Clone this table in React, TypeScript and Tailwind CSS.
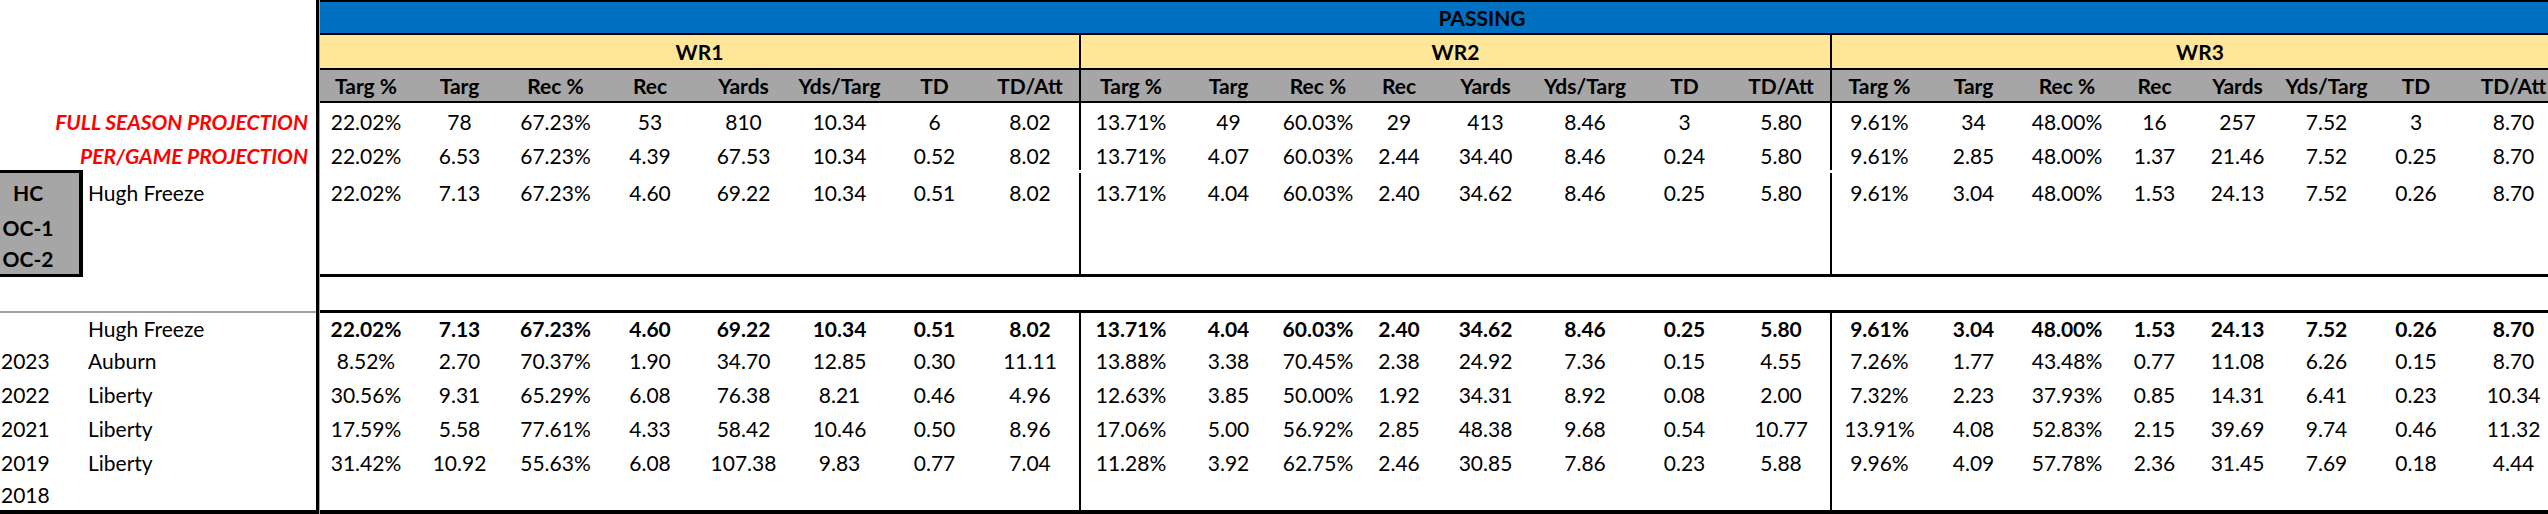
const headers = ['Targ %', 'Targ', 'Rec %', 'Rec', 'Yards', 'Yds/Targ', 'TD', 'TD/Att'];

const groups = [
  {
    name: 'WR1',
    box: 'w-[761px] border-r-2 border-black',
    cols: ['w-[92px]', 'w-[95px]', 'w-[97px]', 'w-[92px]', 'w-[95px]', 'w-[97px]', 'w-[93px]', 'w-[98px]'],
  },
  {
    name: 'WR2',
    box: 'w-[751px] border-r-2 border-black',
    cols: ['w-[100px]', 'w-[95px]', 'w-[84px]', 'w-[78px]', 'w-[95px]', 'w-[104px]', 'w-[95px]', 'w-[98px]'],
  },
  {
    name: 'WR3',
    box: 'w-[736px]',
    cols: ['w-[95px]', 'w-[93px]', 'w-[94px]', 'w-[81px]', 'w-[85px]', 'w-[93px]', 'w-[86px]', 'w-[109px]'],
  },
];

const projections = [
  {
    h: 'h-[37px]',
    vals: [
      '22.02%', '78', '67.23%', '53', '810', '10.34', '6', '8.02',
      '13.71%', '49', '60.03%', '29', '413', '8.46', '3', '5.80',
      '9.61%', '34', '48.00%', '16', '257', '7.52', '3', '8.70',
    ],
  },
  {
    h: 'h-[30px]',
    vals: [
      '22.02%', '6.53', '67.23%', '4.39', '67.53', '10.34', '0.52', '8.02',
      '13.71%', '4.07', '60.03%', '2.44', '34.40', '8.46', '0.24', '5.80',
      '9.61%', '2.85', '48.00%', '1.37', '21.46', '7.52', '0.25', '8.70',
    ],
  },
  {
    h: 'h-[42px] pt-[3px]',
    vals: [
      '22.02%', '7.13', '67.23%', '4.60', '69.22', '10.34', '0.51', '8.02',
      '13.71%', '4.04', '60.03%', '2.40', '34.62', '8.46', '0.25', '5.80',
      '9.61%', '3.04', '48.00%', '1.53', '24.13', '7.52', '0.26', '8.70',
    ],
  },
  { h: 'h-[31px]', vals: [] as string[] },
  { h: 'h-[31px]', vals: [] as string[] },
];

const history = [
  {
    year: '',
    team: 'Hugh Freeze',
    h: 'h-[30px]',
    bold: true,
    vals: [
      '22.02%', '7.13', '67.23%', '4.60', '69.22', '10.34', '0.51', '8.02',
      '13.71%', '4.04', '60.03%', '2.40', '34.62', '8.46', '0.25', '5.80',
      '9.61%', '3.04', '48.00%', '1.53', '24.13', '7.52', '0.26', '8.70',
    ],
  },
  {
    year: '2023',
    team: 'Auburn',
    h: 'h-[34px]',
    vals: [
      '8.52%', '2.70', '70.37%', '1.90', '34.70', '12.85', '0.30', '11.11',
      '13.88%', '3.38', '70.45%', '2.38', '24.92', '7.36', '0.15', '4.55',
      '7.26%', '1.77', '43.48%', '0.77', '11.08', '6.26', '0.15', '8.70',
    ],
  },
  {
    year: '2022',
    team: 'Liberty',
    h: 'h-[34px]',
    vals: [
      '30.56%', '9.31', '65.29%', '6.08', '76.38', '8.21', '0.46', '4.96',
      '12.63%', '3.85', '50.00%', '1.92', '34.31', '8.92', '0.08', '2.00',
      '7.32%', '2.23', '37.93%', '0.85', '14.31', '6.41', '0.23', '10.34',
    ],
  },
  {
    year: '2021',
    team: 'Liberty',
    h: 'h-[34px]',
    vals: [
      '17.59%', '5.58', '77.61%', '4.33', '58.42', '10.46', '0.50', '8.96',
      '17.06%', '5.00', '56.92%', '2.85', '48.38', '9.68', '0.54', '10.77',
      '13.91%', '4.08', '52.83%', '2.15', '39.69', '9.74', '0.46', '11.32',
    ],
  },
  {
    year: '2019',
    team: 'Liberty',
    h: 'h-[34px]',
    vals: [
      '31.42%', '10.92', '55.63%', '6.08', '107.38', '9.83', '0.77', '7.04',
      '11.28%', '3.92', '62.75%', '2.46', '30.85', '7.86', '0.23', '5.88',
      '9.96%', '4.09', '57.78%', '2.36', '31.45', '7.69', '0.18', '4.44',
    ],
  },
  { year: '2018', team: '', h: 'h-[31px]', vals: [] as string[] },
];

function StatRow({ vals, h, bold = false, extra = '' }: { vals: string[]; h: string; bold?: boolean; extra?: string }) {
  return (
    <div className={`flex shrink-0 ${h} ${extra} ${bold ? 'font-bold' : ''}`}>
      {groups.map((g, gi) => (
        <div key={gi} className={`flex shrink-0 ${g.box}`}>
          {g.cols.map((c, ci) => (
            <div key={ci} className={`${c} shrink-0 flex items-center justify-center whitespace-nowrap`}>
              {vals[gi * 8 + ci] ?? ''}
            </div>
          ))}
        </div>
      ))}
    </div>
  );
}

export default function App() {
  return (
    <div className="w-[2548px] h-[514px] overflow-hidden bg-white flex font-['Lato',sans-serif] text-[21px] leading-none text-black">
      {/* left labels */}
      <div className="w-[316px] shrink-0 flex flex-col">
        <div className="h-[103px] shrink-0" />
        <div className="h-[37px] shrink-0 flex items-center justify-end pr-[8px] text-[#ff0000] font-bold italic whitespace-nowrap">
          FULL SEASON PROJECTION
        </div>
        <div className="h-[30px] shrink-0 flex items-center justify-end pr-[8px] text-[#ff0000] font-bold italic whitespace-nowrap">
          PER/GAME PROJECTION
        </div>
        <div className="h-[107px] shrink-0 flex">
          <div className="w-[83px] shrink-0 bg-[#a6a6a6] border-t-[3px] border-b-[3px] border-r-4 border-black flex flex-col font-bold">
            <div className="h-[39px] w-[56px] flex items-center justify-center">HC</div>
            <div className="h-[31px] w-[56px] flex items-center justify-center">OC-1</div>
            <div className="h-[31px] w-[56px] flex items-center justify-center">OC-2</div>
          </div>
          <div className="pt-[3px]">
            <div className="h-[39px] flex items-center pl-[5px] whitespace-nowrap">Hugh Freeze</div>
          </div>
        </div>
        <div className="h-[34px] shrink-0" />
        <div className="h-[2px] shrink-0 bg-[#a0a0a0]" />
        {history.map((r, i) => (
          <div key={i} className={`${r.h} shrink-0 flex items-center`}>
            <div className="w-[88px] pl-[1px]">{r.year}</div>
            <div className="whitespace-nowrap">{r.team}</div>
          </div>
        ))}
        <div className="h-[4px] shrink-0 bg-black" />
      </div>

      {/* divider */}
      <div className="w-[3px] shrink-0 bg-black" />
      <div className="w-px shrink-0 bg-[#a6a6a6]" />

      {/* stats */}
      <div className="w-[2228px] shrink-0 flex flex-col overflow-hidden">
        <div className="h-[2px] shrink-0 bg-black" />
        <div className="h-[31px] shrink-0 bg-[#0070c0] flex items-center">
          <div className="w-[2324px] shrink-0 text-center font-bold">PASSING</div>
        </div>
        <div className="h-[2px] shrink-0 bg-black" />
        <div className="h-[33px] shrink-0 bg-[#ffe699] flex font-bold">
          {groups.map((g) => (
            <div key={g.name} className={`${g.box} shrink-0 flex items-center justify-center`}>
              {g.name}
            </div>
          ))}
        </div>
        <div className="h-[2px] shrink-0 bg-black" />
        <StatRow vals={groups.flatMap(() => headers)} h="h-[31px]" bold extra="bg-[#a6a6a6]" />
        <div className="h-[2px] shrink-0 bg-black" />
        {projections.map((r, i) => (
          <StatRow key={i} vals={r.vals} h={r.h} />
        ))}
        <div className="h-[3px] shrink-0 bg-black" />
        <div className="h-[33px] shrink-0" />
        <div className="h-[3px] shrink-0 bg-black" />
        {history.map((r, i) => (
          <StatRow key={i} vals={r.vals} h={r.h} bold={r.bold} />
        ))}
        <div className="h-[4px] shrink-0 bg-black" />
      </div>
    </div>
  );
}
